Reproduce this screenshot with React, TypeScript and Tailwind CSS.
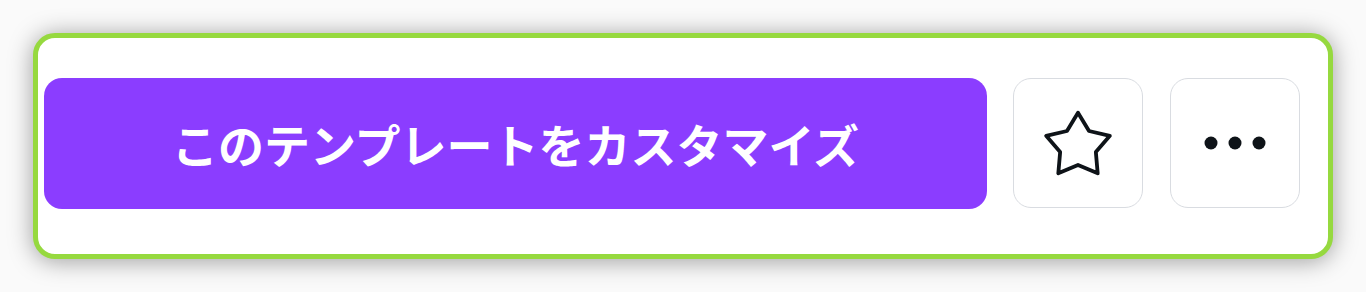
import React from 'react';

function starPoints(r: number, inner: number, cy: number) {
  const pts: string[] = [];
  for (let i = 0; i < 10; i++) {
    const rad = i % 2 === 0 ? r : r * inner;
    const a = (Math.PI / 5) * i - Math.PI / 2;
    pts.push(`${(Math.cos(a) * rad).toFixed(2)},${(Math.sin(a) * rad + cy).toFixed(2)}`);
  }
  return pts.join(' ');
}

function StarIcon() {
  return (
    <svg width="80" height="80" viewBox="-40 -40 80 80" fill="none">
      <polygon
        points={starPoints(33.5, 0.56, 3.2)}
        stroke="#0e1318"
        strokeWidth="3.8"
        strokeLinejoin="round"
      />
    </svg>
  );
}

function DotsIcon() {
  return (
    <svg width="64" height="16" viewBox="0 0 64 16" fill="#0e1318">
      <circle cx="8" cy="8" r="6.5" />
      <circle cx="32" cy="8" r="6.5" />
      <circle cx="56" cy="8" r="6.5" />
    </svg>
  );
}

export default function App() {
  return (
    <div className="w-[1366px] h-[292px] bg-[#fafafa] p-[33px]" style={{ fontFamily: '"Noto Sans CJK JP", "Noto Sans", sans-serif' }}>
      <div className="h-full bg-white border-[5px] border-[#96d93f] rounded-[22px] shadow-[0_2px_24px_rgba(0,0,0,0.38)] flex items-start pt-[40px] pl-[6px] pr-[28px]">
        <button
          type="button"
          className="w-[943px] h-[131px] rounded-[18px] bg-[#8b3dff] text-white text-[46px] font-bold flex items-center justify-center"
        >
          このテンプレートをカスタマイズ
        </button>
        <button
          type="button"
          className="ml-[26px] w-[130px] h-[130px] rounded-[18px] border-[1.5px] border-[#d9dce1] bg-white flex items-center justify-center"
        >
          <StarIcon />
        </button>
        <button
          type="button"
          className="ml-[27px] w-[130px] h-[130px] rounded-[18px] border-[1.5px] border-[#d9dce1] bg-white flex items-center justify-center"
        >
          <DotsIcon />
        </button>
      </div>
    </div>
  );
}
